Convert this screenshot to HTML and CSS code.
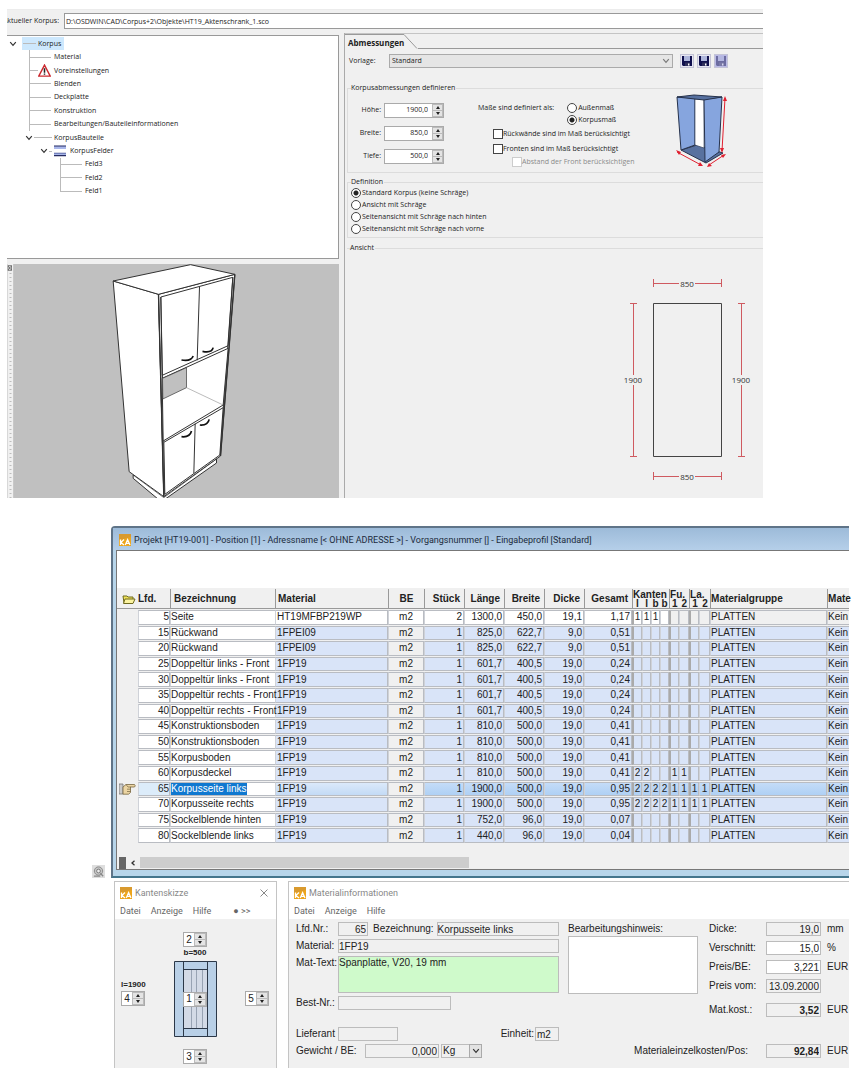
FILE: index.html
```html
<!DOCTYPE html>
<html lang="de">
<head>
<meta charset="utf-8">
<title>Korpus – Aktenschrank</title>
<link rel="stylesheet" href="styles.css">
</head>
<body>
<svg class="defs" width="0" height="0" aria-hidden="true">
  <defs>
    <symbol id="chev" viewBox="0 0 8 6"><path d="M1.2 1.2 4 4.4 6.8 1.2" fill="none" stroke="#333" stroke-width="1.2"/></symbol>
    <symbol id="floppy" viewBox="0 0 10 10"><path d="M0 0H10V10H1L0 9Z" fill="#10104e"/><path d="M2 0H8V5H2Z" fill="#aeb6dc"/><path d="M3 6.5H8V10H3Z" fill="#30305c"/><path d="M6 7.5H7.4V9.6H6Z" fill="#fff"/></symbol>
    <symbol id="ka" viewBox="0 0 12 12"><path d="M0 0H12V12H0Z" fill="#eda51c"/><path d="M0 0H12V3L0 6Z" fill="#d99a2e"/><path d="M1.5 5.5V11M5 5.5 2 8.4 5 11M6.3 11 8.6 5.6 11 11M7.2 9.4H10.2" stroke="#fff" stroke-width="1.3" fill="none"/></symbol>
  </defs>
</svg>

<section class="designer">
  <div class="pathbar">
    <label class="pathlabel" for="path">Aktueller Korpus:</label>
    <input class="path" id="path" value="D:\OSDWIN\CAD\Corpus+2\Objekte\HT19_Aktenschrank_1.sco">
  </div>
  <div class="split">
    <div class="left">
      <ul class="tree">
        <li class="lv0"><svg class="chev"><use href="#chev"/></svg><span class="root"><i class="stub"></i>Korpus</span></li>
        <li class="lv1"><i class="branch"></i>Material</li>
        <li class="lv1"><i class="branch short"></i><svg class="warn" viewBox="0 0 12 12"><path d="M6 1 11.3 11.2H.7Z" fill="#fff" stroke="#cc2a30" stroke-width="1.3"/><path d="M6 4V8M6 8.8V10" stroke="#222" stroke-width="1.4"/></svg>Voreinstellungen</li>
        <li class="lv1"><i class="branch"></i>Blenden</li>
        <li class="lv1"><i class="branch"></i>Deckplatte</li>
        <li class="lv1"><i class="branch"></i>Konstruktion</li>
        <li class="lv1"><i class="branch"></i>Bearbeitungen/Bauteileinformationen</li>
        <li class="lv1 open"><svg class="chev"><use href="#chev"/></svg><i class="stub"></i>KorpusBauteile</li>
        <li class="lv2"><svg class="chev"><use href="#chev"/></svg><i class="stub tiny"></i><svg class="shelf" viewBox="0 0 12 12"><path d="M0 1H12V4H0ZM0 8H12V11H0Z" fill="#a9b7ea"/><path d="M0 1H12M0 10.6H12" stroke="#252b62" stroke-width="1.2"/><path d="M0 8.2H12" stroke="#4a5596" stroke-width=".8"/></svg>KorpusFelder</li>
        <li class="lv3"><i class="branch"></i>Feld3</li>
        <li class="lv3"><i class="branch"></i>Feld2</li>
        <li class="lv3"><i class="branch end"></i>Feld1</li>
      </ul>
      <svg class="view3d" viewBox="21 27 993 702" preserveAspectRatio="xMidYMid meet" role="img" aria-label="3D-Ansicht">
        <path d="M21 27H38V729H21Z" fill="#f0f0f0"/>
        <path d="M30 54V729" stroke="#bdbdbd" stroke-width="6" stroke-dasharray="3 9"/>
        <path d="M23 32H33V46H23ZM23 32 33 46M33 32 23 46" fill="#fff" stroke="#444" stroke-width="2"/>
        <g stroke="#333" stroke-width="3" fill="#fff" stroke-linejoin="round">
          <path d="M398 660V670L476 735H490L648 624V606Z"/>
          <path d="M398 660 490 728 648 612" fill="none" stroke-width="2"/>
          <path d="M338 78 474 118 490 725 386 650Z"/>
          <path d="M474 118 703 58 660 603 490 725Z"/>
          <path d="M338 78 570 29 703 58 474 118Z"/>
          <path d="M481 126 697 67 683 272 485 361Z"/>
          <path d="M597 96 590 316M481 126 493 718M697 67 658 600" fill="none"/>
          <path d="M485 370 683 280 668 450 488 558Z"/>
          <path d="M486 370 558 338V398L487 432Z" fill="#c0c0c0" stroke-width="2"/>
          <path d="M558 398 668 450" stroke="#999" stroke-width="2"/>
          <path d="M490 562 668 458 658 600 493 718Z"/>
          <path d="M584 506 580 655" fill="none"/>
        </g>
        <path d="M474 118 490 725M703 58 660 603" fill="none" stroke="#333" stroke-width="4"/>
        <path d="M543 315Q572 320 578 303M606 289Q634 295 638 278M543 545Q568 548 573 528M598 510Q622 512 626 493" fill="none" stroke="#111" stroke-width="5"/>
      </svg>
    </div>

    <div class="right">
      <div class="tabs"><span class="tab">Abmessungen</span><svg class="slope" viewBox="0 0 14 15" preserveAspectRatio="none"><path d="M0 .5 13 14.5" fill="none" stroke="#999"/></svg><span class="tabrest"></span></div>
      <div class="preset">
        <label for="preset">Vorlage:</label>
        <span class="combo"><select id="preset"><option>Standard</option></select><svg class="chev"><use href="#chev"/></svg></span>
        <button class="tool" aria-label="Speichern"><svg><use href="#floppy"/></svg></button>
        <button class="tool" aria-label="Speichern unter"><svg><use href="#floppy"/></svg></button>
        <button class="tool dim" aria-label="Alle speichern"><svg><use href="#floppy"/></svg></button>
      </div>
      <fieldset class="dims">
        <legend>Korpusabmessungen definieren</legend>
        <div class="sizes">
          <label for="h">Höhe:</label><span class="num"><input id="h" value="1900,0"><span class="ud"><button aria-label="mehr"></button><button aria-label="weniger"></button></span></span>
          <label for="b">Breite:</label><span class="num"><input id="b" value="850,0"><span class="ud"><button aria-label="mehr"></button><button aria-label="weniger"></button></span></span>
          <label for="t">Tiefe:</label><span class="num"><input id="t" value="500,0"><span class="ud"><button aria-label="mehr"></button><button aria-label="weniger"></button></span></span>
        </div>
        <div class="basis">
          <div class="basisradios">
            <span>Maße sind definiert als:</span>
            <div>
              <label><input type="radio" name="basis">Außenmaß</label>
              <label><input type="radio" name="basis" checked>Korpusmaß</label>
            </div>
          </div>
          <label class="tick"><input type="checkbox">Rückwände sind im Maß berücksichtigt</label>
          <label class="tick second"><input type="checkbox">Fronten sind im Maß berücksichtigt</label>
          <label class="tick off"><input type="checkbox" disabled>Abstand der Front berücksichtigen</label>
        </div>
        <svg class="box" viewBox="0 0 54 74">
          <path d="M5 56 21 51 47 59 30 69Z" fill="#58719f" stroke="#26324c"/>
          <path d="M1 3 19 4V51L5 56Z" fill="#86a5de" stroke="#26324c"/>
          <path d="M19 5H28V54L19 51Z" fill="#fff" stroke="#26324c" stroke-width=".6"/>
          <path d="M28 5 46 3 43 58 29 68Z" fill="#86a5de" stroke="#26324c"/>
          <path d="M1 3 18 1 46 3 28 6Z" fill="#56709f" stroke="#26324c"/>
          <path d="M49 4 46 57M1 58 25 71M33 71 48 61" stroke="#e02030" stroke-width="1" fill="none"/>
          <path d="M49 2 51 7H47ZM46 59 44 54H48ZM0 56 5 58 3 61ZM27 72 22 72 24 68ZM31 73 33 69 36 72ZM50 60 45 61 47 64Z" fill="#e02030"/>
        </svg>
      </fieldset>
      <fieldset class="defn">
        <legend>Definition</legend>
        <label><input type="radio" name="def" checked>Standard Korpus (keine Schräge)</label>
        <label><input type="radio" name="def">Ansicht mit Schräge</label>
        <label><input type="radio" name="def">Seitenansicht mit Schräge nach hinten</label>
        <label><input type="radio" name="def">Seitenansicht mit Schräge nach vorne</label>
      </fieldset>
      <fieldset class="front">
        <legend>Ansicht</legend>
        <svg class="elev" viewBox="0 0 130 206">
          <path d="M31.500 1V9M99.500 1V9M31 5.500H57M73 5.500H100M31.500 194V202M99.500 194V202M31 198.500H57M73 198.500H100M8 25.500H15M8 178.500H15M11.500 26V97M11.500 107V178M116 25.500H123M116 178.500H123M119.500 26V97M119.500 107V178" stroke="#cf5a60" fill="none"/>
          <path d="M31.500 25.500H99.500V178.500H31.500Z" fill="none" stroke="#444"/>
          <g class="dimtext" text-anchor="middle"><text x="65" y="9">850</text><text x="65" y="202">850</text><text x="11" y="105">1900</text><text x="119" y="105">1900</text></g>
        </svg>
      </fieldset>
    </div>
  </div>
</section>

<div class="projectrow">
  <svg class="corner" viewBox="0 0 14 14"><path d="M0 0H14V14H0Z" fill="#dedede"/><circle cx="7" cy="6.500" r="4.500" fill="#c4c4c4" stroke="#888"/><circle cx="7" cy="6.500" r="2" fill="#eee" stroke="#777"/><path d="M9 9 12 12M2 12H9" stroke="#888" stroke-width="1.500"/></svg>
  <section class="project">
    <header class="ptitle"><svg class="ka"><use href="#ka"/></svg>Projekt [HT19-001] - Position [1] - Adressname [&lt; OHNE ADRESSE &gt;] - Vorgangsnummer [] - Eingabeprofil [Standard]</header>
    <div class="pbody">
      <table class="grid">
        <colgroup><col class="c21"><col class="c32"><col class="c105"><col class="c113"><col class="c36"><col class="c40"><col class="c40"><col class="c40"><col class="c40"><col class="c48"><col class="c10"><col class="c9"><col class="c9"><col class="c9"><col class="c10"><col class="c10"><col class="c10"><col class="c11"><col class="c117"><col></colgroup>
        <thead><tr>
          <th class="fold"><svg viewBox="0 0 14 12"><path d="M1 3H5L6 4H11V10H2Z" fill="#f0e25a" stroke="#6f6a1e"/><path d="M3 6H13L11 10.500H1.500Z" fill="#fbf3a0" stroke="#6f6a1e"/></svg></th>
          <th class="lfd">Lfd.</th><th class="name">Bezeichnung</th><th>Material</th><th class="mid">BE</th><th class="end">Stück</th><th class="end">Länge</th><th class="end">Breite</th><th class="end">Dicke</th><th class="end">Gesamt</th>
          <th colspan="4" class="duo">Kanten<span><i>l</i><i>l</i><i>b</i><i>b</i></span></th>
          <th colspan="2" class="duo">Fu.<span><i>1</i><i>2</i></span></th>
          <th colspan="2" class="duo">La.<span><i>1</i><i>2</i></span></th>
          <th class="grp">Materialgruppe</th><th class="grp">Mate</th>
        </tr></thead>
        <tbody>
          <tr class="first"><td></td><td>5</td><td>Seite</td><td>HT19MFBP219WP</td><td>m2</td><td>2</td><td>1300,0</td><td>450,0</td><td>19,1</td><td>1,17</td><td>1</td><td>1</td><td>1</td><td></td><td></td><td></td><td></td><td></td><td>PLATTEN</td><td>Kein</td></tr>
          <tr><td></td><td>15</td><td>Rückwand</td><td>1FPEI09</td><td>m2</td><td>1</td><td>825,0</td><td>622,7</td><td>9,0</td><td>0,51</td><td></td><td></td><td></td><td></td><td></td><td></td><td></td><td></td><td>PLATTEN</td><td>Kein</td></tr>
          <tr><td></td><td>20</td><td>Rückwand</td><td>1FPEI09</td><td>m2</td><td>1</td><td>825,0</td><td>622,7</td><td>9,0</td><td>0,51</td><td></td><td></td><td></td><td></td><td></td><td></td><td></td><td></td><td>PLATTEN</td><td>Kein</td></tr>
          <tr><td></td><td>25</td><td>Doppeltür links - Front</td><td>1FP19</td><td>m2</td><td>1</td><td>601,7</td><td>400,5</td><td>19,0</td><td>0,24</td><td></td><td></td><td></td><td></td><td></td><td></td><td></td><td></td><td>PLATTEN</td><td>Kein</td></tr>
          <tr><td></td><td>30</td><td>Doppeltür links - Front</td><td>1FP19</td><td>m2</td><td>1</td><td>601,7</td><td>400,5</td><td>19,0</td><td>0,24</td><td></td><td></td><td></td><td></td><td></td><td></td><td></td><td></td><td>PLATTEN</td><td>Kein</td></tr>
          <tr><td></td><td>35</td><td>Doppeltür rechts - Front</td><td>1FP19</td><td>m2</td><td>1</td><td>601,7</td><td>400,5</td><td>19,0</td><td>0,24</td><td></td><td></td><td></td><td></td><td></td><td></td><td></td><td></td><td>PLATTEN</td><td>Kein</td></tr>
          <tr><td></td><td>40</td><td>Doppeltür rechts - Front</td><td>1FP19</td><td>m2</td><td>1</td><td>601,7</td><td>400,5</td><td>19,0</td><td>0,24</td><td></td><td></td><td></td><td></td><td></td><td></td><td></td><td></td><td>PLATTEN</td><td>Kein</td></tr>
          <tr><td></td><td>45</td><td>Konstruktionsboden</td><td>1FP19</td><td>m2</td><td>1</td><td>810,0</td><td>500,0</td><td>19,0</td><td>0,41</td><td></td><td></td><td></td><td></td><td></td><td></td><td></td><td></td><td>PLATTEN</td><td>Kein</td></tr>
          <tr><td></td><td>50</td><td>Konstruktionsboden</td><td>1FP19</td><td>m2</td><td>1</td><td>810,0</td><td>500,0</td><td>19,0</td><td>0,41</td><td></td><td></td><td></td><td></td><td></td><td></td><td></td><td></td><td>PLATTEN</td><td>Kein</td></tr>
          <tr><td></td><td>55</td><td>Korpusboden</td><td>1FP19</td><td>m2</td><td>1</td><td>810,0</td><td>500,0</td><td>19,0</td><td>0,41</td><td></td><td></td><td></td><td></td><td></td><td></td><td></td><td></td><td>PLATTEN</td><td>Kein</td></tr>
          <tr><td></td><td>60</td><td>Korpusdeckel</td><td>1FP19</td><td>m2</td><td>1</td><td>810,0</td><td>500,0</td><td>19,0</td><td>0,41</td><td>2</td><td>2</td><td></td><td></td><td>1</td><td>1</td><td></td><td></td><td>PLATTEN</td><td>Kein</td></tr>
          <tr class="sel"><td><svg class="hand" viewBox="0 0 17 12"><path d="M0 1H4V11H0Z" fill="#c9c9c9" stroke="#777" stroke-width=".8"/><path d="M4 4 7 1.500H15.500Q17 3 15.500 4H11.500V9.500L9.500 11.200H4Z" fill="#ecd5a3" stroke="#77663f" stroke-width=".8"/><path d="M8 6.200H11.500M8 8.500H11.500M7 1.500 9 4H12" fill="none" stroke="#77663f" stroke-width=".7"/></svg></td><td>65</td><td><mark>Korpusseite links</mark></td><td>1FP19</td><td>m2</td><td>1</td><td>1900,0</td><td>500,0</td><td>19,0</td><td>0,95</td><td>2</td><td>2</td><td>2</td><td>2</td><td>1</td><td>1</td><td>1</td><td>1</td><td>PLATTEN</td><td>Kein</td></tr>
          <tr><td></td><td>70</td><td>Korpusseite rechts</td><td>1FP19</td><td>m2</td><td>1</td><td>1900,0</td><td>500,0</td><td>19,0</td><td>0,95</td><td>2</td><td>2</td><td>2</td><td>2</td><td>1</td><td>1</td><td>1</td><td>1</td><td>PLATTEN</td><td>Kein</td></tr>
          <tr><td></td><td>75</td><td>Sockelblende hinten</td><td>1FP19</td><td>m2</td><td>1</td><td>752,0</td><td>96,0</td><td>19,0</td><td>0,07</td><td></td><td></td><td></td><td></td><td></td><td></td><td></td><td></td><td>PLATTEN</td><td>Kein</td></tr>
          <tr><td></td><td>80</td><td>Sockelblende links</td><td>1FP19</td><td>m2</td><td>1</td><td>440,0</td><td>96,0</td><td>19,0</td><td>0,04</td><td></td><td></td><td></td><td></td><td></td><td></td><td></td><td></td><td>PLATTEN</td><td>Kein</td></tr>
        </tbody>
      </table>
      <div class="hscroll"><i class="grip"></i><button aria-label="Nach links"><svg viewBox="0 0 6 6"><path d="M4.500 .8 2 3 4.500 5.200" fill="none" stroke="#333" stroke-width="1.300"/></svg></button><i class="thumb"></i></div>
    </div>
  </section>
</div>

<div class="panels">
  <section class="panel">
    <header class="wtitle"><svg class="ka"><use href="#ka"/></svg>Kantenskizze<button class="close" aria-label="Schließen"><svg viewBox="0 0 8 8"><path d="M.5 .5 7.500 7.500M7.500 .5 .5 7.500" stroke="#888" fill="none"/></svg></button></header>
    <nav class="menu"><a href="#">Datei</a><a href="#">Anzeige</a><a href="#">Hilfe</a><a href="#" class="more">● &gt;&gt;</a></nav>
    <div class="sketch">
      <div class="side">
        <label for="k4">l=1900</label>
        <span class="num mini"><input id="k4" value="4"><span class="ud"><button aria-label="mehr"></button><button aria-label="weniger"></button></span></span>
      </div>
      <div class="center">
        <span class="num mini"><input id="k2" value="2" aria-label="Kante 2"><span class="ud"><button aria-label="mehr"></button><button aria-label="weniger"></button></span></span>
        <label for="k2">b=500</label>
        <div class="board">
          <svg viewBox="0 0 43 76"><path d="M.5 .5H42.500V75.500H.5Z" fill="#b9d0e7"/><path d="M10 8H34V68H10Z" fill="#d3dae6"/><path d="M17.500 8V68M22.500 8V68M28.500 8V68" stroke="#98a3b3"/><path d="M.5 .5H42.500V75.500H.5ZM9.500 .5V75.500M33.500 .5V75.500M9.500 8.500H33.500M9.500 67.500H33.500" fill="none" stroke="#2c3848"/></svg>
          <span class="num mini"><input value="1" aria-label="Fläche 1"><span class="ud"><button aria-label="mehr"></button><button aria-label="weniger"></button></span></span>
        </div>
        <span class="num mini last"><input value="3" aria-label="Kante 3"><span class="ud"><button aria-label="mehr"></button><button aria-label="weniger"></button></span></span>
      </div>
      <div class="side far">
        <span class="num mini"><input value="5" aria-label="Kante 5"><span class="ud"><button aria-label="mehr"></button><button aria-label="weniger"></button></span></span>
      </div>
    </div>
  </section>

  <section class="panel">
    <header class="wtitle"><svg class="ka"><use href="#ka"/></svg>Materialinformationen</header>
    <nav class="menu"><a href="#">Datei</a><a href="#">Anzeige</a><a href="#">Hilfe</a></nav>
    <div class="info">
      <div class="item">
        <div class="line"><label for="nr">Lfd.Nr.:</label><input id="nr" class="w30 num-r" value="65" readonly><label class="bez" for="bz">Bezeichnung:</label><input id="bz" class="grow" value="Korpusseite links" readonly></div>
        <div class="line"><label for="ma">Material:</label><input id="ma" class="grow" value="1FP19" readonly></div>
        <div class="line top"><label for="mt">Mat-Text:</label><textarea id="mt" class="grow green">Spanplatte, V20, 19 mm</textarea></div>
        <div class="line"><label for="bn">Best-Nr.:</label><input id="bn" class="w113" readonly></div>
        <div class="line supplier"><label for="li">Lieferant</label><input id="li" class="w60" readonly><label class="unit" for="ei">Einheit:</label><input id="ei" class="w24" value="m2" readonly></div>
        <div class="line"><label class="wide" for="ge">Gewicht / BE:</label><input id="ge" class="w74 num-r" value="0,000" readonly><span class="combo kg"><select aria-label="Gewichtseinheit"><option>Kg</option></select><span class="drop"><svg class="chev"><use href="#chev"/></svg></span></span></div>
      </div>
      <div class="costs">
        <div class="hint"><label for="hi">Bearbeitungshinweis:</label><textarea id="hi"></textarea></div>
        <div class="prices">
          <label for="di">Dicke:</label><input id="di" value="19,0" readonly><span>mm</span>
          <label for="ve">Verschnitt:</label><input id="ve" class="edit" value="15,0"><span>%</span>
          <label for="pb">Preis/BE:</label><input id="pb" class="edit" value="3,221"><span>EUR</span>
          <label for="pv">Preis vom:</label><input id="pv" value="13.09.2000" readonly><span></span>
          <label for="mk">Mat.kost.:</label><input id="mk" class="strong" value="3,52" readonly><span>EUR</span>
        </div>
        <div class="total"><label for="to">Materialeinzelkosten/Pos:</label><input id="to" class="strong" value="92,84" readonly><span>EUR</span></div>
      </div>
    </div>
  </section>
</div>
</body>
</html>
```
FILE: styles.css
```css
* { box-sizing: border-box; }
body { margin: 0; padding: 9px 3px 12px 7px; background: #fff; color: #222; font: 10px/14px "Liberation Sans", Arial, sans-serif; }
input, select, textarea, button { font: inherit; color: inherit; margin: 0; padding: 0; border-radius: 0; min-width: 0; }
button { border: 0; background: none; display: flex; align-items: center; justify-content: center; }
.defs { position: absolute; }
.chev { width: 8px; height: 6px; flex: none; }
i { font-style: normal; }

/* Korpus designer */
.designer { margin-right: 86px; background: #f0f0f0; font: 7px/12px "Open Sans", Tahoma, sans-serif; }
.pathbar { display: flex; align-items: center; height: 24px; padding-bottom: 1px; border-top: 1px solid #ececec; }
.pathlabel { width: 52px; display: flex; justify-content: flex-end; overflow: hidden; white-space: nowrap; }
.path { flex: 1; height: 16px; margin-left: 5px; padding-left: 1px; border: 1px solid #999; border-right: 0; background: #fff; }
.split { display: grid; grid-template-columns: 332px 1fr; gap: 5px; }
.left { display: flex; flex-direction: column; gap: 5px; padding-top: 2px; }
.tree { list-style: none; margin: 0; padding: 1px 0 60px; display: grid; grid-template-rows: repeat(12, 1fr); height: 224px; background: #fff; border: solid #999; border-width: 1px 1px 1px 0; }
.tree li { display: flex; align-items: center; }
.lv0 { padding-left: 2px; }
.lv1 { padding-left: 22px; }
.tree .open { padding-left: 18px; }
.lv2 { padding-left: 33px; }
.lv3 { padding-left: 53px; }
.root { display: flex; align-items: center; align-self: stretch; margin-left: 5px; padding-right: 3px; background: #cde8fd; }
.stub { width: 13px; height: 1px; margin: 0 2px 0 1px; background: #bbb; }
.open .stub { width: 18px; }
.tree .tiny { width: 3px; }
.branch { align-self: stretch; width: 22px; margin-right: 3px; border-left: 1px solid #bbb; background: linear-gradient(#bbb, #bbb) 0 50% / 100% 1px no-repeat; }
.branch.short { width: 9px; margin-right: 0; }
.branch.end { border-left: 0; background: linear-gradient(#bbb, #bbb) 0 50% / 100% 1px no-repeat, linear-gradient(#bbb, #bbb) 0 0 / 1px 50% no-repeat; }
.warn { width: 13px; height: 13px; margin-right: 3px; }
.shelf { width: 12px; height: 12px; margin-right: 4px; }
.view3d { display: block; width: 100%; height: 234px; background: #c0c0c0; }

.right { border-left: 1px solid #aaa; display: flex; flex-direction: column; }
.tabs { display: flex; height: 16px; border-top: 1px solid #c4c4c4; }
.tab { padding: 1px 0 0 3px; font-weight: bold; font-size: 8px; line-height: 14px; border-top: 1px solid #999; }
.slope { width: 14px; height: 15px; flex: none; }
.tabrest { flex: 1; border-bottom: 1px solid #999; }
.preset { display: flex; align-items: center; gap: 3px; height: 15px; margin: 4px 35px 0 4px; }
.preset label { width: 37px; }
.combo { position: relative; display: flex; flex: 1; }
.combo select { appearance: none; width: 100%; height: 14px; padding-left: 2px; border: 1px solid #aaa; background: #e5e5e5; }
.combo > .chev { position: absolute; right: 3px; top: 4px; opacity: .6; }
.combo + .tool { margin-left: 4px; }
.tool { width: 14px; height: 14px; border: 1px solid #c3c3d6; background: #e6e6f2; }
.tool svg { width: 10px; height: 10px; flex: none; }
.dim { background: #b9b9e6; }
.dim svg { opacity: .45; }
fieldset { margin: 0 0 0 2px; padding: 0 0 0 3px; border: 1px solid #dcdcdc; border-right: 0; min-width: 0; }
legend { padding: 0 1px 0 0; line-height: 12px; }
.dims { display: flex; margin-top: 14px; height: 91px; }
.sizes { display: grid; grid-template-columns: 30px 60px; grid-auto-rows: 14px; gap: 9px 3px; margin-top: 9px; align-items: center; text-align: right; }
.num { display: flex; height: 15px; border: 1px solid #aaa; background: #fff; }
.num input { flex: 1; width: 0; border: 0; background: none; text-align: right; padding-right: 4px; }
.ud { display: flex; flex-direction: column; width: 11px; background: #e4e4e4; border: 1px solid #bbb; }
.ud button { flex: 1; }
.ud button::after { content: ""; border: 2px solid transparent; border-top: 0; border-bottom: 3px solid #222; }
.ud button + button { border-top: 1px solid #bbb; }
.ud button + button::after { border-bottom: 0; border-top: 3px solid #222; }
.basis { margin: 6px 0 0 34px; flex: 1; display: flex; flex-direction: column; align-items: flex-start; white-space: nowrap; }
.basisradios { display: flex; gap: 13px; height: 28px; padding-top: 2px; }
.basis label, .defn label { display: flex; align-items: center; gap: 1px; height: 12px; }
input[type="radio"], input[type="checkbox"] { appearance: none; width: 10px; height: 10px; flex: none; border: 1px solid #444; background: #fff; }
input[type="radio"] { border-radius: 50%; }
input[type="radio"]:checked { background: radial-gradient(circle, #222 0 2px, #fff 3px); }
.basis .tick { margin: 0 0 2px 15px; gap: 0; }
.basis .second { margin-top: 1px; }
.basis .off { margin-left: 34px; color: #8a8a8a; margin-top: -1px; }
.off input { border-color: #ccc; }
.box { width: 54px; height: 74px; flex: none; margin-right: 33px; }
.defn { margin-top: 4px; height: 61px; }
.defn legend { line-height: 10px; }
.front { margin-top: 4px; flex: 1; border-bottom: 0; border-left: 0; }
.elev { display: block; width: 130px; height: 206px; margin: 24px 11px 0 auto; }
.dimtext { font-size: 8px; fill: #333; }

/* Project window */
.projectrow { display: flex; align-items: flex-end; margin-top: 28px; }
.corner { width: 13px; height: 13px; flex: none; margin: 0 6px 0 85px; }
.project { flex: 1; min-width: 0; border: 2px solid #5f7488; border-right: 0; border-radius: 4px 0 0 0; background: #b7d5ea; padding: 0 0 6px 3px; border-bottom-color: #44758c; }
.ptitle { display: flex; align-items: center; gap: 3px; height: 22px; margin-left: -3px; padding: 2px 0 0 6px; background: linear-gradient(#9dbbd9, #b5cfe9); font: 9px/14px Roboto, "Segoe UI", sans-serif; color: #1c2b3c; white-space: nowrap; }
.ka { width: 12px; height: 12px; flex: none; }
.pbody { background: #f0f0f0; border: solid #777; border-width: 1px 0 1px 1px; }
.pbody::before { content: ""; display: block; height: 37px; background: #fff; }
.grid { width: 100%; height: 256px; table-layout: fixed; border-collapse: separate; border-spacing: 0 1px; }
.c9 { width: 9px; } .c10 { width: 10px; } .c11 { width: 11px; } .c21 { width: 21px; } .c32 { width: 32px; } .c36 { width: 36px; } .c40 { width: 40px; } .c48 { width: 48px; } .c105 { width: 105px; } .c113 { width: 113px; } .c117 { width: 117px; }
.grid th { height: 20px; padding: 0 2px; text-align: left; white-space: nowrap; border-bottom: 1px solid #999; border-left: 1px solid #999; line-height: 12px; }
.grid .fold { padding: 0 0 0 5px; border-left: 0; }
.fold svg { display: block; width: 14px; height: 12px; }
.grid .lfd { border-left: 0; padding-left: 0; }
.grid .name { padding-left: 3px; }
.grid .mid { text-align: center; }
.grid .end { text-align: right; padding-right: 4px; }
.grid .duo { padding: 0; line-height: 9px; }
.grid .grp { padding: 0; }
.duo span { display: flex; }
.duo i { flex: 1; text-align: center; }
.grid td { height: 14px; padding: 0 1px; line-height: 12px; white-space: nowrap; border: 1px solid #b9bcc2; border-left-color: #cfd2d8; background: #d9e4f8; }
.grid td:nth-child(1) { border: 0; background: none; padding: 0 0 0 2px; }
.grid td:nth-child(2), .grid td:nth-child(3) { background: #fff; }
.grid td:nth-child(2) { text-align: right; padding-right: 0; }
.grid td:nth-child(3) { padding: 0; border-right: 0; }
.grid td:nth-child(4) { padding: 0 0 0 1px; }
.grid td:nth-child(5) { background: #f0f0f0; text-align: center; }
.grid td:nth-child(n+6):nth-child(-n+10) { text-align: right; }
.grid td:nth-child(n+11):nth-child(-n+18) { text-align: center; padding: 0; }
.grid td:nth-child(11), .grid td:nth-child(15), .grid td:nth-child(17) { border-left: 2px solid #aaa; }
.grid td:nth-child(19), .grid td:nth-child(20) { padding: 0; }
.grid td:nth-child(20) { border-right: 0; }
.grid .first td:nth-child(n+4):nth-child(-n+14) { background: #fff; }
.grid .first td:nth-child(5), .grid .first td:nth-child(9), .grid .first td:nth-child(10), .grid .first td:nth-child(n+15) { background: #f0f0f0; }
.grid .sel td:nth-child(2) { background: #dcecfa; }
.grid .sel td:nth-child(4) { background: linear-gradient(#dbe9fa, #c3daf5); }
.grid .sel td:nth-child(n+6) { background: linear-gradient(#c4dcf8, #afd0f4); }
.hand { display: block; width: 17px; height: 12px; }
mark { display: inline-block; background: #0f78d0; color: #fff; }
.hscroll { display: flex; align-items: center; height: 13px; margin-top: 12px; padding-left: 2px; }
.grip { width: 7px; height: 12px; background: #666; }
.hscroll button { width: 14px; height: 12px; }
.hscroll button svg { width: 6px; height: 6px; }
.thumb { width: 45%; height: 11px; background: #cdcdcd; }

/* Tool windows */
.panels { display: grid; grid-template-columns: 163px minmax(0, 1fr); gap: 11px; margin: 3px 0 0 107px; }
.panel { border: solid #c4c4c4; border-width: 1px 1px 0 1px; background: #fff; display: flex; flex-direction: column; min-width: 0; }
.panel + .panel { border-right: 0; }
.wtitle { display: flex; align-items: center; gap: 3px; height: 22px; padding: 0 8px 0 5px; font: 9px/14px Roboto, "Segoe UI", sans-serif; color: #888; }
.close { margin-left: auto; width: 9px; height: 9px; }
.close svg { width: 8px; height: 8px; }
.menu { display: flex; gap: 10px; height: 15px; padding-left: 5px; font: 9px/15px Roboto, "Segoe UI", sans-serif; }
.menu a { color: #666; text-decoration: none; }
.menu .more { margin-left: 12px; }
.sketch { flex: 1; display: grid; grid-template-columns: 1fr 43px 1fr; background: #f0f0f0; padding: 0 7px 4px 6px; }
.sketch label { font-weight: bold; font-size: 8px; line-height: 12px; }
.side { padding-top: 60px; display: flex; flex-direction: column; align-items: flex-start; }
.far { align-items: flex-end; padding-top: 72px; }
.mini { width: 24px; height: 15px; }
.mini input { padding: 0; text-align: center; }
.mini .ud { width: 12px; }
.center { display: flex; flex-direction: column; align-items: center; padding-top: 13px; }
.center .last { margin-top: 12px; }
.board { display: grid; place-items: center; margin-top: 2px; }
.board > * { grid-area: 1 / 1; }
.board svg { width: 43px; height: 76px; }
.info { flex: 1; display: grid; grid-template-columns: minmax(0, 1fr) 281px; gap: 9px; background: #f0f0f0; padding: 3px 0 10px 7px; }
.info input, .info textarea { height: 14px; padding: 0 1px; border: 1px solid #bcbcbc; background: #f0f0f0; line-height: 12px; }
.item { display: flex; flex-direction: column; gap: 3px; min-width: 0; }
.line { display: flex; align-items: center; height: 14px; }
.line label:first-child { width: 42px; flex: none; white-space: nowrap; }
.line label.wide:first-child { width: 69px; }
.line.top { height: 37px; align-items: flex-start; }
.line .grow { flex: 1; width: 0; }
.info .line .grow { padding: 0; }
.info .green { height: 37px; background: #cffacb; resize: none; overflow: hidden; }
.bez { margin: 0 3px 0 5px; }
.w24 { width: 24px; } .w30 { width: 30px; } .w60 { width: 60px; } .w74 { width: 74px; } .w113 { width: 113px; }
.info .num-r { text-align: right; }
.supplier { margin-top: 14px; }
.unit { margin: 0 1px 0 auto; }
.kg { flex: none; width: 41px; margin-left: 2px; }
.combo.kg select { padding-left: 1px; background: #f0f0f0; border-color: #bcbcbc; line-height: 12px; }
.drop { position: absolute; right: 0; top: 0; width: 13px; height: 14px; border: 1px solid #aaa; background: #e2e2e2; display: flex; align-items: center; justify-content: center; pointer-events: none; }
.costs { display: grid; grid-template-columns: 130px 1fr; column-gap: 11px; align-content: space-between; }
.hint { display: flex; flex-direction: column; }
.info .hint textarea { width: 130px; height: 58px; background: #fff; resize: none; }
.prices { display: grid; grid-template-columns: 51px 55px 1fr; gap: 5px 6px; align-items: center; }
.prices label { white-space: nowrap; }
.prices input, .total input { text-align: right; width: 55px; }
.info .edit { background: #fff; }
.strong { font-weight: bold; }
.prices :nth-last-child(-n+3) { margin-top: 5px; }
.total { grid-column: 1 / -1; display: flex; align-items: center; gap: 6px; }
.total label { margin: 0 12px 0 auto; }
.total span { width: 22px; }
```
